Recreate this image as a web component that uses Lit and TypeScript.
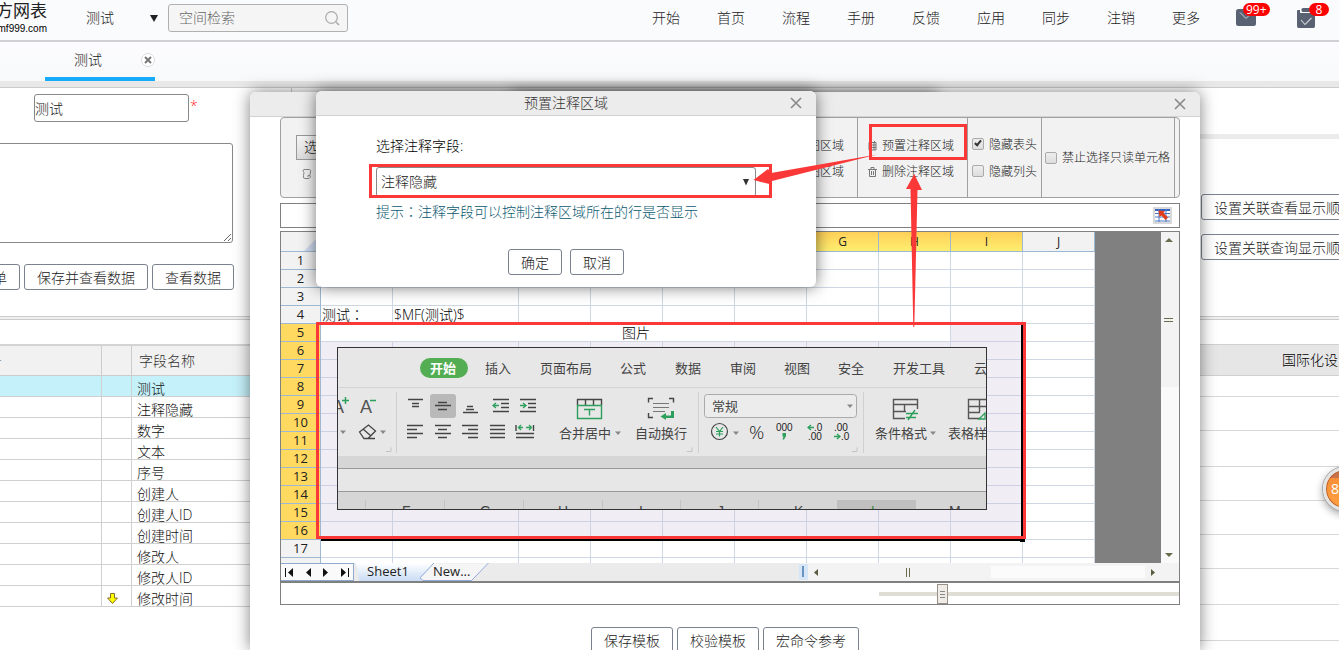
import { LitElement, html, svg, css, nothing } from "lit";
import { customElement } from "lit/decorators.js";
import { classMap } from "lit/directives/class-map.js";

const base = css`
  :host {
    display: block;
    box-sizing: border-box;
    font-family: "Open Sans", "Noto Sans CJK SC", sans-serif;
    font-size: 14px;
    font-weight: 300;
    line-height: 20px;
    color: #222;
  }
  *,
  *::before,
  *::after {
    box-sizing: border-box;
  }
  button,
  input,
  select,
  textarea {
    font: inherit;
    color: inherit;
    margin: 0;
  }
  .btn {
    height: 26px;
    padding: 1px 12px 0;
    border: 1px solid #7a8290;
    border-radius: 3px;
    background: #fff;
    line-height: 23px;
    white-space: nowrap;
    flex: none;
  }
  svg {
    display: block;
    flex: none;
  }
`;

const closeCross = html`<svg width="12" height="12" viewBox="0 0 12 12">
  <path d="M1 1L11 11M11 1L1 11" stroke="#888" stroke-width="1.6" fill="none" />
</svg>`;

@customElement("top-header")
class TopHeader extends LitElement {
  static styles = [
    base,
    css`
      :host {
        background: #fafbfd;
      }
      .bar {
        display: flex;
        align-items: center;
        height: 42px;
        padding-bottom: 4px;
        border-bottom: 2px solid #ced0d3;
      }
      .logo {
        width: 62px;
        height: 36px;
        overflow: hidden;
        display: flex;
        flex-direction: column;
        align-items: flex-end;
        padding-right: 15px;
        color: #222;
        white-space: nowrap;
      }
      .name {
        font-size: 17px;
        font-weight: 400;
        line-height: 22px;
        height: 22px;
      }
      .site {
        font: 10px/13px "Liberation Sans", sans-serif;
        color: #000;
      }
      .space {
        appearance: none;
        border: 0;
        background: none;
        width: 88px;
        padding: 0 0 0 24px;
        outline: none;
      }
      .spacebox {
        display: flex;
        align-items: center;
        width: 106px;
      }
      .search {
        display: flex;
        align-items: center;
        width: 180px;
        height: 28px;
        padding: 0 7px 0 10px;
        background: #f5f5f5;
        border: 1px solid #b0b0b0;
        border-radius: 3px;
      }
      .search input {
        flex: 1;
        min-width: 0;
        border: 0;
        padding: 0;
        background: none;
        outline: none;
      }
      .search input::placeholder {
        color: #666;
        opacity: 1;
      }
      nav {
        display: flex;
        gap: 37px;
        margin-left: auto;
      }
      a {
        color: #222;
        text-decoration: none;
      }
      .notice {
        position: relative;
        border: 0;
        background: none;
        padding: 0;
        width: 20px;
        height: 20px;
      }
      .icons {
        display: flex;
        gap: 40px;
        padding: 0 23px 0 36px;
      }
      .badge {
        position: absolute;
        left: 7px;
        top: -5px;
        height: 13px;
        padding: 0 3px;
        min-width: 20px;
        border-radius: 7px;
        background: #f00;
        color: #fff;
        font-size: 12px;
        font-weight: 400;
        line-height: 13px;
      }
      .badge.few {
        left: 13px;
      }
      .tabs {
        display: flex;
        height: 39px;
        padding-left: 45px;
        background: linear-gradient(#fcfcfe, #f8f9fb);
      }
      .tab {
        display: flex;
        align-items: center;
        justify-content: space-between;
        width: 110px;
        padding-left: 29px;
        border-bottom: 4px solid #17abfc;
      }
      .x {
        border: 1px solid #ddd;
        border-radius: 7px;
        width: 14px;
        height: 14px;
        padding: 2px;
        background: #fff;
      }
      .strip {
        height: 7px;
        background: #e8e8e8;
        border-bottom: 1px solid #ccc;
      }
    `,
  ];
  render() {
    const links = ["开始", "首页", "流程", "手册", "反馈", "应用", "同步", "注销", "更多"];
    return html`
      <header class="bar">
        <div class="logo"><span class="name">方网表</span><span class="site">www.mf999.com</span></div>
        <div class="spacebox">
          <select class="space" aria-label="空间"><option>测试</option></select>
          <svg width="8" height="7" viewBox="0 0 8 7"><path d="M0 0H8L4 7Z" fill="#222" /></svg>
        </div>
        <label class="search">
          <input placeholder="空间检索" aria-label="空间检索" />
          <svg width="15" height="15" viewBox="0 0 15 15">
            <circle cx="6.5" cy="6.5" r="5.8" fill="none" stroke="#aaa" stroke-width="1.2" />
            <path d="M11 11L14 14" stroke="#aaa" stroke-width="1.6" />
          </svg>
        </label>
        <nav>${links.map((t) => html`<a href="#">${t}</a>`)}</nav>
        <div class="icons">
          <button class="notice" aria-label="消息">
            <svg width="20" height="20" viewBox="0 0 20 20">
              <rect x="0" y="1" width="20" height="17" rx="2.5" fill="#586272" />
              <path d="M4 4.500L10 10.500L16 4.500" fill="none" stroke="#cfd4da" stroke-width="1" />
            </svg>
            <span class="badge">99+</span>
          </button>
          <button class="notice" aria-label="待办">
            <svg width="20" height="20" viewBox="0 0 20 20">
              <path d="M2 2H4V5H16V2H17.500Q19 2 19 4V18Q19 20 17.500 20H2.500Q1 20 1 18V3Q1 2 2 2Z" fill="#586272" />
              <rect x="5.500" y="0" width="9" height="4" rx="1.500" fill="#586272" />
              <path d="M5 12L9 16.500L15.500 10" fill="none" stroke="#cfd4da" stroke-width="1.100" />
            </svg>
            <span class="badge few">8</span>
          </button>
        </div>
      </header>
      <div class="tabs">
        <div class="tab">
          <span>测试</span>
          <button class="x" aria-label="关闭">
            <svg width="8" height="8" viewBox="0 0 8 8"><path d="M1 1L7 7M7 1L1 7" stroke="#777" stroke-width="2" /></svg>
          </button>
        </div>
      </div>
      <div class="strip"></div>
    `;
  }
}

@customElement("form-panel")
class FormPanel extends LitElement {
  static styles = [
    base,
    css`
      :host {
        border-right: 1px solid #ccc;
        overflow: hidden;
      }
      .field {
        display: flex;
        align-items: flex-start;
        gap: 1px;
        padding: 6px 0 0 34px;
      }
      .field input {
        width: 155px;
        height: 28px;
        padding: 0;
        border: 1px solid #888;
        border-radius: 3px;
        outline: none;
      }
      .star {
        color: #f22;
        line-height: 24px;
      }
      textarea {
        display: block;
        width: 243px;
        height: 100px;
        margin: 21px 0 21px -10px;
        border: 1px solid #888;
        border-radius: 3px;
      }
      .actions {
        display: flex;
        gap: 4px;
        margin-left: -62px;
      }
      .divider {
        height: 4px;
        margin: 26px 0 24px;
        background: #f0f0f0;
        border: solid #ccc;
        border-width: 1px 0;
      }
      table {
        width: 291px;
        table-layout: fixed;
        border-collapse: separate;
        border-spacing: 0;
        border-top: 2px solid #d4d4d4;
      }
      .c1 {
        width: 102px;
      }
      .c2 {
        width: 30px;
      }
      th {
        height: 30px;
        padding: 0 0 0 7px;
        background: #f1f1f1;
        border: solid #ccc;
        border-width: 0 1px 1px 0;
        font-weight: inherit;
        text-align: left;
        color: #333;
      }
      th.no {
        text-indent: -33px;
      }
      td {
        height: 21px;
        padding: 5px 0 0 5px;
        border: solid #d0d0d0;
        border-width: 0 1px 1px 0;
        line-height: 15px;
        color: #111;
      }
      .on td {
        background: #c5f1fa;
      }
    `,
  ];
  render() {
    const rows = ["测试", "注释隐藏", "数字", "文本", "序号", "创建人", "创建人ID", "创建时间", "修改人", "修改人ID", "修改时间"];
    return html`
      <label class="field"><input .value=${"测试"} aria-label="表单名称" /><span class="star">*</span></label>
      <textarea aria-label="说明"></textarea>
      <div class="actions">
        <button class="btn">保存表单</button>
        <button class="btn">保存并查看数据</button>
        <button class="btn">查看数据</button>
      </div>
      <div class="divider"></div>
      <table>
        <colgroup><col class="c1" /><col class="c2" /><col /></colgroup>
        <thead><tr><th class="no">序号</th><th></th><th>字段名称</th></tr></thead>
        <tbody>
          ${rows.map(
            (name, i) => html`<tr class=${classMap({ on: i === 0 })}>
              <td></td>
              <td>
                ${i === rows.length - 1
                  ? html`<svg width="11" height="11" viewBox="0 0 11 11">
                      <path d="M3.500 .5H7.500V5H10.500L5.500 10.500L.5 5H3.500Z" fill="#ff0" stroke="#886a30" />
                    </svg>`
                  : nothing}
              </td>
              <td>${name}</td>
            </tr>`
          )}
        </tbody>
      </table>
    `;
  }
}

@customElement("relation-panel")
class RelationPanel extends LitElement {
  static styles = [
    base,
    css`
      :host {
        width: 159px;
        margin-left: auto;
        overflow: hidden;
      }
      .band {
        height: 5px;
        margin: 46px 0 55px;
        background: #ebebeb;
      }
      .list {
        display: flex;
        flex-direction: column;
        align-items: flex-start;
        gap: 14px;
        padding-left: 21px;
      }
      .divider {
        height: 4px;
        margin: 56px 0 24px;
        background: #f0f0f0;
        border: solid #ccc;
        border-width: 1px 0;
      }
      .head {
        height: 32px;
        padding-left: 102px;
        background: #e6e6e6;
        border: solid #d0d0d0;
        border-width: 1px 0;
        line-height: 30px;
        color: #000;
        white-space: nowrap;
      }
      .row {
        height: 34px;
        border-bottom: 1px solid #d8d8d8;
      }
      .row.tall {
        height: 36px;
      }
      .row:first-child {
        height: 21px;
      }
    `,
  ];
  render() {
    const tall = [false, false, true, false, false, false, true, true];
    return html`
      <div class="band"></div>
      <div class="list">
        <button class="btn">设置关联查看显示顺序</button>
        <button class="btn">设置关联查询显示顺序</button>
      </div>
      <div class="divider"></div>
      <div class="head">国际化设置</div>
      <div class="rows">${tall.map((t) => html`<div class=${classMap({ row: true, tall: t })}></div>`)}</div>
    `;
  }
}

/* Floating picture of a spreadsheet ribbon placed on the sheet. */
const lines = (d: string, stroke = "#444", w = 1.4) => svg`<path d=${d} stroke=${stroke} stroke-width=${w} fill="none"/>`;
const caret = (x: number, y: number) => svg`<path d="M${x - 3} ${y - 1.5}h6l-3 3.500z" fill="#888"/>`;
const corner = (x: number) => svg`<path d="M${x} 451.500h5v-4" fill="none" stroke="#c4c4c4"/>`;

@customElement("ribbon-picture")
class RibbonPicture extends LitElement {
  static styles = [
    base,
    css`
      :host {
        border: 1px solid #333;
      }
      text {
        font: 13px "Noto Sans CJK SC", sans-serif;
        fill: #444;
      }
      .big {
        font: 18px "Liberation Sans", sans-serif;
        fill: #555;
      }
      .pct {
        font: 300 19px "Open Sans", sans-serif;
        fill: #222;
      }
      .num {
        font: 10px "Liberation Sans", sans-serif;
        fill: #222;
      }
      .pill {
        font-weight: 700;
        fill: #fff;
      }
      .col {
        font: 14px "Liberation Sans", sans-serif;
        fill: #444;
      }
      .cur {
        fill: #3f8f3f;
      }
    `,
  ];
  render() {
    const tabs: [string, number][] = [
      ["插入", 485], ["页面布局", 540], ["公式", 620], ["数据", 675], ["审阅", 730],
      ["视图", 784], ["安全", 838], ["开发工具", 893], ["云", 974],
    ];
    const cols: [string, number][] = [
      ["F", 402], ["G", 480], ["H", 558], ["I", 639], ["J", 717], ["K", 794], ["M", 949],
    ];
    const g = "#2c9f5c";
    return html`<svg width="648" height="161" viewBox="338 348 648 161" role="img" aria-label="图片">
      <rect x="338" y="348" width="648" height="161" fill="#e7e7e7" />
      <rect x="420" y="358" width="48" height="20" rx="10" fill="#52ad53" />
      <text class="pill" x="430" y="373">开始</text>
      ${tabs.map(([t, x]) => svg`<text x=${x} y="373">${t}</text>`)}
      ${lines("M338 387.500H986", "#d4d4d4", 1)}
      <text class="big" x="332" y="413">A</text>
      <text class="big" x="360" y="413">A</text>
      ${lines("M342 400.500h7M345.500 397v7M370 400.500h6", g, 1.5)}
      ${caret(343, 432)}
      <path d="M359.500 432L368.500 425L375.500 431L368 438.500H364Z M363 429L371 436M364 438.500H375" fill="none" stroke="#444" stroke-width="1.300" />
      ${caret(383, 432)} ${corner(386)}
      ${lines("M396.500 392V453M698.500 392V453M863.500 392V453", "#d0d0d0", 1)}
      <rect x="430" y="394" width="26" height="24" rx="3" fill="#b9b9b9" />
      ${lines("M408 399.500h15M412 403.500h7M412 406.500h7M438 402.500h9M435 405.500h16M438 409.500h9M467 406.500h6M466 409.500h8M463 412.500h15")}
      ${lines("M493 399.500h16M501 403.500h8M501 407.500h8M493 411.500h16M520 399.500h16M528 403.500h8M528 407.500h8M520 411.500h16")}
      ${lines("M499 405.500h-6M496 403l-3 2.500l3 2.500M520 405.500h6M523 403l3 2.500l-3 2.500", g, 1.3)}
      ${lines("M407 425.500h16M407 429.500h10M407 433.500h16M407 437.500h10M435 425.500h16M438 429.500h9M435 433.500h16M438 437.500h9M462 425.500h16M468 429.500h10M462 433.500h16M468 437.500h10M490 425.500h15M490 429.500h15M490 433.500h15M490 437.500h15M516 433.500h18M516 437.500h18M516 425v6M533.500 425v6")}
      ${lines("M518 427.500h5M521 425l-2.500 2.500l2.500 2.500M526 427.500h5M529 425l2.500 2.500l-2.500 2.500", g, 1.3)}
      ${lines("M577.500 405V399.500H601.500V405M585.500 399v6M593.500 399v6")}
      ${lines("M577.500 405.500h24v13h-24zM584 409.500h11M589.500 409.500v6", g, 1.4)}
      <text x="559" y="438">合并居中</text>
      ${caret(618, 433)}
      ${lines("M653 398.500h-4.500v4M669 398.500h4.500v4M648.500 413v4.500h4.500")}
      ${lines("M653 403.500h16M653 407.500h16M653 411.500h12", "#777", 1)}
      <path d="M674 411V418H666V420L660.500 416.500L666 413V415.500H671V411Z" fill=${g} />
      <text x="635" y="438">自动换行</text>
      ${corner(687)}
      <rect x="704.500" y="394.500" width="152" height="23" rx="3" fill="#ececec" stroke="#aaa" />
      <text x="712" y="411">常规</text>
      ${caret(850, 406)}
      <circle cx="719.500" cy="431.500" r="8" fill="none" stroke="#444" stroke-width="1.200" />
      ${lines("M716 427l3.500 4.500l3.500-4.500M719.500 431.500v5M716 431.500h7M716 434h7", g, 1.2)}
      ${caret(736, 433)}
      <text class="pct" x="749" y="439">%</text>
      <text class="num" x="776" y="431">000</text>
      <path d="M782.500 433h3.500v3l-2 3.500h-1.500l1-3h-1z" fill=${g} />
      <text class="num" x="814" y="431">.0</text>
      <text class="num" x="808" y="440">.00</text>
      ${lines("M814 427.500h-6M811 425l-3 2.500l3 2.500M834 436.500h6M837 434l3 2.500l-3 2.500", g, 1.3)}
      <text class="num" x="834" y="431">.00</text>
      <text class="num" x="841" y="440">.0</text>
      ${corner(852)}
      ${lines("M905 418.500H893.500V399.500H917.500V409M893 404.500h24M893 411.500h13M904.500 404v7", "#555")}
      ${lines("M906 413.500h12M906 417.500h10M908 420l7-10", g, 1.4)}
      <text x="875" y="438">条件格式</text>
      ${caret(933, 433)}
      ${lines("M980 418.500H968.500V399.500H986M968 406.500h18M968 412.500h12M979.500 400v12", "#555")}
      ${lines("M979 419l6-6v6z", g, 1.3)}
      <text x="948" y="438">表格样式</text>
      <rect x="338" y="456" width="648" height="12" fill="#d6d6d6" />
      ${lines("M338 468.500H986M338 491.500H986", "#999", 1)}
      <rect x="338" y="492" width="648" height="17" fill="#d6d6d6" />
      <rect x="837" y="500" width="79" height="9" fill="#c0c0c0" />
      ${lines("M365.500 500v9M444.500 500v9M523.500 500v9M602.500 500v9M680.500 500v9M758.500 500v9", "#c4c4c4", 1)}
      ${cols.map(([t, x]) => svg`<text class="col" x=${x} y="516">${t}</text>`)}
      <text class="col cur" x="871" y="516">L</text>
    </svg>`;
  }
}

@customElement("sheet-view")
class SheetView extends LitElement {
  static styles = [
    base,
    css`
      :host {
        position: relative;
        border: 1px solid #808080;
        border-bottom-width: 2px;
        line-height: 17px;
        font-weight: 400;
      }
      .view {
        display: flex;
        height: 331px;
        background: #808080;
      }
      .grid {
        position: relative;
        flex: none;
        overflow: hidden;
      }
      table {
        width: 814px;
        table-layout: fixed;
        border-collapse: separate;
        border-spacing: 0;
        background: #fff;
      }
      .ch {
        width: 40px;
      }
      .c {
        width: 72px;
      }
      .cw {
        width: 126px;
      }
      th,
      td {
        height: 18px;
        padding: 0;
        border: solid #cfd6e4;
        border-width: 0 1px 1px 0;
        font-weight: 400;
        white-space: nowrap;
      }
      th {
        background: #f2f2f2;
        border-color: #9db8d2;
        text-align: center;
        font-size: 13px;
        color: #222;
      }
      td {
        padding-left: 1px;
        font-size: 14px;
        font-weight: 300;
        color: #000;
      }
      .colon {
        font-family: "Noto Sans CJK TC", sans-serif;
      }
      thead th {
        height: 20px;
        font-size: 12px;
        color: #222;
      }
      thead th.sel {
        background: linear-gradient(#ffd058, #ffee70);
      }
      tbody th.sel {
        background: #ffd960;
      }
      td.sel {
        background: #f0eef4;
        border-color: #cdd1e3;
      }
      td.mid {
        text-align: center;
        line-height: 16px;
      }
      .all {
        display: block;
        margin: 5px 3px 0 auto;
      }
      .float {
        position: absolute;
        left: 56px;
        top: 115px;
      }
      .range {
        position: absolute;
        left: 40px;
        top: 91px;
        width: 703px;
        height: 218px;
        border: solid #000;
        border-width: 0 3px 3px 0;
      }
      .range::after {
        content: "";
        position: absolute;
        right: -4px;
        bottom: -4px;
        width: 5px;
        height: 5px;
        background: #000;
      }
      .vbar {
        display: flex;
        flex-direction: column;
        align-items: center;
        justify-content: space-between;
        width: 18px;
        margin-left: auto;
        padding: 6px 3px 6px 0;
        background: linear-gradient(#f3f3f3 155px, #fafafa 155px);
      }
      .foot {
        display: flex;
        align-items: center;
        height: 18px;
        background: #ebebeb;
      }
      .nav {
        display: flex;
        align-items: center;
        gap: 12px;
        width: 73px;
        height: 18px;
        padding-left: 4px;
        border: 1px solid #8fa9cf;
        border-left: 0;
        background: #fafafa;
      }
      .nav button {
        border: 0;
        padding: 0;
        background: none;
      }
      .tab {
        border: 0;
        height: 18px;
        background: linear-gradient(#fff, #c9dcf5);
        clip-path: polygon(0 0, 100% 0, 82% 100%, 4% 100%);
        width: 80px;
        margin-left: 2px;
        padding: 0 16px 2px 0;
        line-height: 16px;
        font-size: 13px;
      }
      .slant {
        position: relative;
        margin-left: -16px;
        height: 18px;
      }
      .new {
        position: absolute;
        left: 13px;
        top: 0;
        border: 0;
        padding: 0;
        background: none;
        line-height: 17px;
        font-size: 13px;
      }
      .hbar {
        display: flex;
        align-items: center;
        margin-left: auto;
        width: 380px;
        height: 18px;
        background: #f3f3f3;
      }
      .split {
        width: 9px;
        height: 16px;
        background: #d6e6f6;
        border: solid #d6e6f6;
        border-width: 2px 3px;
      }
      .split i {
        display: block;
        width: 2px;
        height: 11px;
        background: #6a94c0;
      }
      .la {
        margin-left: 6px;
      }
      .grip {
        margin-left: 87px;
      }
      .rest {
        width: 154px;
        height: 12px;
        margin-left: 81px;
        background: #fbfbfb;
      }
      .ra {
        margin-left: 6px;
      }
    `,
  ];
  render() {
    const cols = "ABCDEFGHIJ".split("");
    const rows = Array.from({ length: 18 }, (_, i) => i + 1);
    const text = (r: number, c: string) => {
      if (r !== 4) return nothing;
      if (c === "A") return html`测试<span class="colon">：</span>`;
      return c === "B" ? "$MF(测试)$" : nothing;
    };
    const cells = (r: number) => {
      if (r === 5)
        return html`<td colspan="8" class="mid">图片</td><td class="sel"></td><td></td>`;
      return cols.map((c) => html`<td class=${classMap({ sel: r > 5 && r < 17 && c !== "J" })}>${text(r, c)}</td>`);
    };
    return html`
      <div class="view">
        <div class="grid">
          <table>
            <colgroup>
              <col class="ch" />${cols.map((c) => html`<col class=${c === "B" ? "cw" : "c"} />`)}
            </colgroup>
            <thead>
              <tr>
                <th><svg class="all" width="13" height="13" viewBox="0 0 13 13"><path d="M13 0V13H0Z" fill="#cfdbee" /></svg></th>
                ${cols.map((c) => html`<th class=${classMap({ sel: c !== "J" })}>${c}</th>`)}
              </tr>
            </thead>
            <tbody>
              ${rows.map((r) => html`<tr><th class=${classMap({ sel: r > 4 && r < 17 })}>${r < 18 ? r : nothing}</th>${cells(r)}</tr>`)}
            </tbody>
          </table>
          <div class="range"></div>
          <ribbon-picture class="float"></ribbon-picture>
        </div>
        <div class="vbar">
          <svg width="8" height="4" viewBox="0 0 8 4"><path d="M0 4L4 0L8 4Z" fill="#6b6b4d" /></svg>
          <svg width="9" height="160" viewBox="0 0 9 160"><path d="M0 .5H9M0 3.500H9" stroke="#6b6b4d" /></svg>
          <svg width="8" height="4" viewBox="0 0 8 4"><path d="M0 0H8L4 4Z" fill="#6b6b4d" /></svg>
        </div>
      </div>
      <div class="foot">
        <div class="nav">
          <button aria-label="第一张"><svg width="9" height="9" viewBox="0 0 9 9"><path d="M.5 0V9" stroke="#111" /><path d="M8 0V9L3 4.500Z" fill="#111" /></svg></button>
          <button aria-label="上一张"><svg width="5" height="9" viewBox="0 0 5 9"><path d="M5 0V9L0 4.500Z" fill="#111" /></svg></button>
          <button aria-label="下一张"><svg width="5" height="9" viewBox="0 0 5 9"><path d="M0 0V9L5 4.500Z" fill="#111" /></svg></button>
          <button aria-label="最后一张"><svg width="9" height="9" viewBox="0 0 9 9"><path d="M8.500 0V9" stroke="#111" /><path d="M1 0V9L6 4.500Z" fill="#111" /></svg></button>
        </div>
        <button class="tab">Sheet1</button>
        <div class="slant">
          <svg width="70" height="18" viewBox="0 0 70 18">
            <path d="M16 .5H69L52 17.500H3L0 15Z" fill="#f5f5f5" />
            <path d="M14 0L-3 18M68.500 0L51.500 17.500H3L0 15" fill="none" stroke="#8fa9d8" />
          </svg>
          <button class="new">New...</button>
        </div>
        <div class="hbar">
          <span class="split"><i></i></span>
          <svg class="la" width="5" height="7" viewBox="0 0 5 7"><path d="M4 0V7L0 3.500Z" fill="#5c5c40" /></svg>
          <svg class="grip" width="4" height="9" viewBox="0 0 4 9"><path d="M.5 0V9M3.500 0V9" stroke="#6b6b4d" /></svg>
          <span class="rest"></span>
          <svg class="ra" width="5" height="7" viewBox="0 0 5 7"><path d="M0 0V7L4 3.500Z" fill="#5c5c40" /></svg>
        </div>
      </div>
    `;
  }
}

@customElement("template-dialog")
class TemplateDialog extends LitElement {
  static styles = [
    base,
    css`
      :host {
        display: flex;
        flex-direction: column;
        background: #fff;
        border-radius: 6px 6px 0 0;
        box-shadow: 0 0 16px rgba(0, 0, 0, 0.5);
      }
      .title {
        display: flex;
        align-items: center;
        justify-content: flex-end;
        height: 25px;
        padding-right: 14px;
        background: #ececec;
        border-bottom: 1px solid #d2d2d2;
        border-radius: 6px 6px 0 0;
        flex: none;
      }
      .title button {
        border: 0;
        padding: 0;
        background: none;
      }
      .body {
        display: flex;
        flex-direction: column;
        padding: 0 20px 0 30px;
      }
      .tools {
        display: flex;
        justify-content: flex-end;
        height: 81px;
        border: 1px solid #a0a0a0;
        border-radius: 4px;
        background: #f2f2f2;
        font-size: 12px;
        color: #222;
      }
      .cell {
        display: flex;
        flex-direction: column;
        justify-content: center;
        gap: 6px;
        padding: 0 4px;
        border-right: 1px solid #a0a0a0;
        white-space: nowrap;
      }
      .first {
        flex: 1;
        align-items: flex-start;
        gap: 9px;
        padding: 0 15px 2px;
        border: 0;
      }
      .pick {
        height: 25px;
        padding: 0 7px;
        border: 1px solid #999;
        background: linear-gradient(#f6f6f6, #dcdcdc);
        font-size: 14px;
        color: #111;
      }
      .notes {
        padding: 2px 13px 0 10px;
      }
      .views {
        padding: 2px 13px 0 0;
      }
      .last {
        padding: 0 4px 0 3px;
      }
      .gutter {
        width: 4px;
      }
      .tool {
        display: flex;
        align-items: center;
        gap: 5px;
        border: 0;
        padding: 0;
        background: none;
      }
      label {
        display: flex;
        align-items: center;
        gap: 5px;
        line-height: 21px;
      }
      input[type="checkbox"] {
        appearance: none;
        width: 12px;
        height: 12px;
        border: 1px solid #aaa;
        border-radius: 2px;
        background: linear-gradient(#eee, #ddd);
      }
      input[type="checkbox"]:checked::before {
        content: "";
        display: block;
        width: 4px;
        height: 7px;
        margin: 0 0 0 3px;
        border: solid #333;
        border-width: 0 2px 2px 0;
        transform: rotate(40deg);
      }
      .formula {
        display: flex;
        align-items: center;
        justify-content: flex-end;
        height: 25px;
        margin: 5px 0 3px;
        padding-right: 7px;
        border: 1px solid #808080;
      }
      .formula input {
        flex: 1;
        border: 0;
        padding: 0 4px;
        outline: none;
        background: none;
        height: 22px;
      }
      .status {
        display: flex;
        justify-content: flex-end;
        align-items: center;
        height: 22px;
        border: 1px solid #808080;
        border-top: 0;
      }
      .zoom {
        appearance: none;
        width: 300px;
        height: 4px;
        background: #e0ddd5;
        outline: none;
      }
      .zoom::-webkit-slider-thumb {
        appearance: none;
        width: 11px;
        height: 20px;
        border: 1px solid #999088;
        background: linear-gradient(#888, #888) center 6px / 5px 1px no-repeat,
          linear-gradient(#888, #888) center 9px / 5px 1px no-repeat,
          linear-gradient(#888, #888) center 12px / 5px 1px no-repeat, #efebe7;
      }
      .actions {
        display: flex;
        justify-content: center;
        gap: 4px;
        padding: 22px 10px 0 0;
      }
    `,
  ];
  render() {
    return html`
      <div class="title"><button aria-label="关闭">${closeCross}</button></div>
      <div class="body">
        <div class="tools">
          <div class="cell first">
            <button class="pick">选择</button>
            <svg width="18" height="10" viewBox="0 0 18 10">
              <path d="M7.500 .5H13.500Q15.500 1 14.500 3L14 6M8 .5Q6 1.500 8 3.500L7.500 6.500Q6.500 9.500 9 9.500H13Q15.500 8 14 6.500H12V8" fill="none" stroke="#888" />
            </svg>
          </div>
          <div class="cell views">
            <button class="tool">预置视图区域</button>
            <button class="tool">删除视图区域</button>
          </div>
          <div class="cell notes">
            <button class="tool">
              <svg width="9" height="10" viewBox="0 0 9 10"><path d="M1 1.500H8V9H1ZM1 4H8M1 6.500H8M3.500 2V9M6 2V9M2.500 0V2M6.500 0V2" fill="none" stroke="#777" /></svg>
              预置注释区域
            </button>
            <button class="tool">
              <svg width="9" height="10" viewBox="0 0 9 10"><path d="M0 2.500H9M3 2V.5H6V2M1.500 3V9.500H7.500V3M3.500 4V8M5.500 4V8" fill="none" stroke="#777" /></svg>
              删除注释区域
            </button>
          </div>
          <div class="cell">
            <label><input type="checkbox" checked />隐藏表头</label>
            <label><input type="checkbox" />隐藏列头</label>
          </div>
          <div class="cell last"><label><input type="checkbox" />禁止选择只读单元格</label></div>
          <span class="gutter"></span>
        </div>
        <div class="formula">
          <input aria-label="公式" />
          <svg width="19" height="17" viewBox="0 0 19 17">
            <rect width="19" height="17" fill="#d9d9d9" />
            <rect x="2" y="2" width="15" height="13" fill="#fff" />
            <path d="M2 3H17" stroke="#3565c0" stroke-width="2" />
            <path d="M2 6.500H17M2 10H17M2 14H17M6 2V15M13 2V15" stroke="#4f78c4" fill="none" />
            <path d="M5.500 3.500L12 4L10.500 6L15 10.500L12.500 13L8.500 8.500L6.500 10Z" fill="#e23c1c" />
          </svg>
        </div>
        <sheet-view></sheet-view>
        <div class="status"><input class="zoom" type="range" min="0" max="100" value="20" aria-label="缩放" /></div>
        <div class="actions">
          <button class="btn">保存模板</button>
          <button class="btn">校验模板</button>
          <button class="btn">宏命令参考</button>
        </div>
      </div>
    `;
  }
}

@customElement("note-dialog")
class NoteDialog extends LitElement {
  static styles = [
    base,
    css`
      :host {
        background: #fff;
        border-radius: 6px;
        box-shadow: 0 0 16px rgba(0, 0, 0, 0.55);
      }
      .title {
        display: flex;
        align-items: center;
        height: 25px;
        padding: 0 14px 0 26px;
        background: #ececec;
        border-bottom: 1px solid #d2d2d2;
        border-radius: 6px 6px 0 0;
        color: #333;
      }
      .title span {
        flex: 1;
        text-align: center;
      }
      .title button {
        border: 0;
        padding: 0;
        background: none;
      }
      .body {
        padding: 20px 60px 12px;
      }
      .name {
        display: block;
        color: #000;
      }
      .select {
        display: flex;
        align-items: center;
        height: 30px;
        margin: 11px 0 4px;
        padding-right: 6px;
        border: 1px solid #888;
        border-radius: 3px;
      }
      select {
        appearance: none;
        flex: 1;
        border: 0;
        padding: 0 4px;
        background: none;
        outline: none;
        color: #222;
      }
      .hint {
        color: #0a5870;
        white-space: nowrap;
      }
      .colon {
        font-family: "Noto Sans CJK TC", sans-serif;
      }
      .actions {
        display: flex;
        justify-content: center;
        gap: 8px;
        padding-top: 27px;
      }
    `,
  ];
  render() {
    return html`
      <div class="title"><span>预置注释区域</span><button aria-label="关闭">${closeCross}</button></div>
      <div class="body">
        <label class="name" for="field">选择注释字段:</label>
        <div class="select">
          <select id="field"><option>注释隐藏</option></select>
          <svg width="6" height="7" viewBox="0 0 6 7"><path d="M0 0H6L3 6.500Z" fill="#333" /></svg>
        </div>
        <div class="hint">提示<span class="colon">：</span>注释字段可以控制注释区域所在的行是否显示</div>
        <div class="actions"><button class="btn">确定</button><button class="btn">取消</button></div>
      </div>
    `;
  }
}

@customElement("app-root")
class AppRoot extends LitElement {
  static styles = [
    base,
    css`
      :host {
        position: relative;
        height: 100vh;
        overflow: hidden;
        background: #fff;
      }
      .page {
        display: flex;
        align-items: stretch;
      }
      form-panel {
        width: 292px;
      }
      .back,
      .template,
      .note,
      .marks,
      .ball {
        position: absolute;
      }
      .template {
        left: 250px;
        right: 139px;
        top: 92px;
        bottom: 0;
      }
      .back {
        left: 512px;
        top: 93px;
        width: 426px;
        height: 40px;
        box-shadow: 0 0 14px rgba(0, 0, 0, 0.55);
      }
      .note {
        left: 316px;
        top: 91px;
        width: 500px;
      }
      .marks {
        left: 0;
        top: 0;
        pointer-events: none;
      }
      .ball {
        right: -28px;
        top: 467px;
        width: 44px;
        height: 44px;
        padding: 0 0 0 5px;
        text-align: left;
        color: #fff;
        font-weight: 400;
        border: 3px solid #e4e4e4;
        border-radius: 22px;
        background: linear-gradient(#c8714a 8px, #f98f38 8px, #ffa040);
        box-shadow: inset 0 0 0 1px #b8602c, 0 0 0 1px #aaa, 0 3px 8px rgba(0, 0, 0, 0.4);
      }
    `,
  ];
  render() {
    return html`
      <top-header></top-header>
      <main class="page">
        <form-panel></form-panel>
        <relation-panel></relation-panel>
      </main>
      <div class="back"></div>
      <template-dialog class="template"></template-dialog>
      <note-dialog class="note"></note-dialog>
      <svg class="marks" width="1339" height="650" viewBox="0 0 1339 650" aria-hidden="true">
        <g fill="none" stroke="#fb3838" stroke-width="3">
          <rect x="370.500" y="165.500" width="400" height="31" />
          <rect x="870.500" y="125.500" width="95" height="33" />
          <rect x="317.500" y="323.500" width="707" height="214" />
        </g>
        <g fill="#fb3838">
          <path d="M753.500 180L768 169L771 173L877 154.500L772 181L771.500 184.500Z" />
          <path d="M914.300 174L922 190L917.500 190L914.300 327H913.300L910.500 189L906 189Z" />
        </g>
      </svg>
      <button class="ball">8</button>
    `;
  }
}
